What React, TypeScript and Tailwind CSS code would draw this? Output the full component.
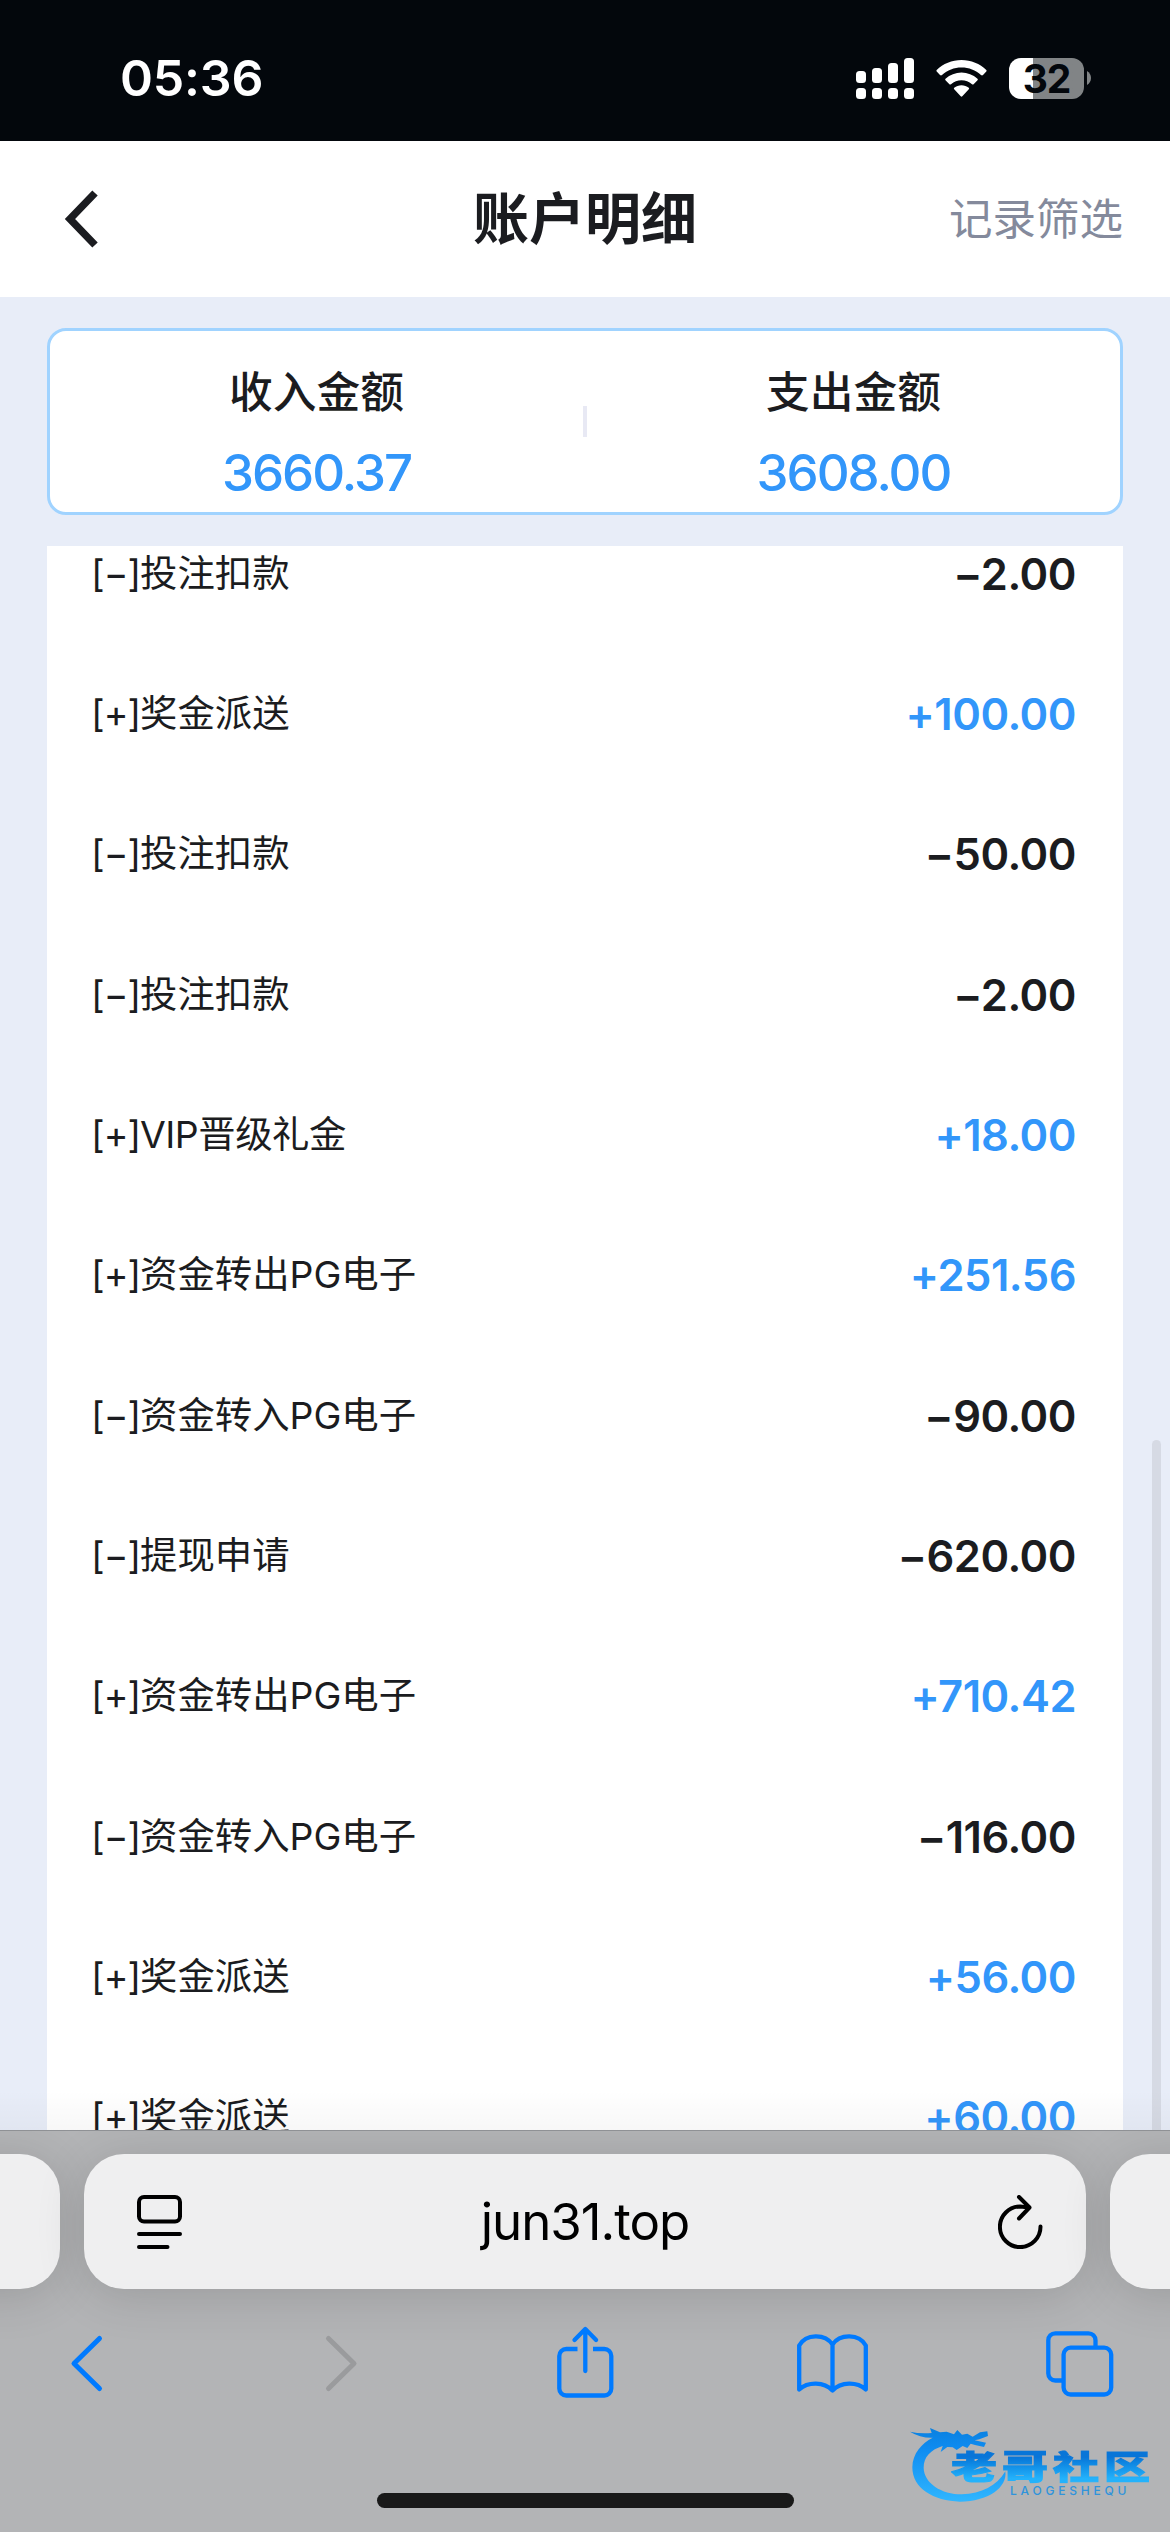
import clsx from "clsx";

interface RecordItem {
    label: string;
    amount: string;
}

const records: RecordItem[] = [
    { label: "投注扣款", amount: "−2.00" },
    { label: "奖金派送", amount: "+100.00" },
    { label: "投注扣款", amount: "−50.00" },
    { label: "投注扣款", amount: "−2.00" },
    { label: "VIP晋级礼金", amount: "+18.00" },
    { label: "资金转出PG电子", amount: "+251.56" },
    { label: "资金转入PG电子", amount: "−90.00" },
    { label: "提现申请", amount: "−620.00" },
    { label: "资金转出PG电子", amount: "+710.42" },
    { label: "资金转入PG电子", amount: "−116.00" },
    { label: "奖金派送", amount: "+56.00" },
    { label: "奖金派送", amount: "+60.00" },
];

function StatusBar() {
    return (
        <div className="h-[141px] shrink-0 bg-[#03070c] pt-[48px] pl-[120px] pr-[79px] flex justify-between text-white">
            <span className="h-[60px] leading-[60px] text-[50px] font-semibold tracking-[-0.2px]">05:36</span>
            <div className="h-[60px] flex items-center">
                <svg className="w-[58px] h-[41px]" viewBox="0 0 58 41" fill="currentColor">
                    <rect x="0" y="13" width="10" height="12" rx="3.5" />
                    <rect x="16" y="10" width="10" height="15" rx="3.5" />
                    <rect x="32" y="5" width="10" height="20" rx="3.5" />
                    <rect x="48" y="0" width="10" height="25" rx="3.5" />
                    <rect x="0" y="30" width="10" height="11" rx="3.5" />
                    <rect x="16" y="30" width="10" height="11" rx="3.5" />
                    <rect x="32" y="30" width="10" height="11" rx="3.5" />
                    <rect x="48" y="30" width="10" height="11" rx="3.5" />
                </svg>
                <svg className="w-[51px] h-[41px] ml-[22px]" viewBox="0 0 51 41" fill="currentColor">
                    <path d="M25.5 2C35 2 44 5.700 50.300 12Q51 12.800 50.300 13.600L47 17Q46 17.800 45 17C39.500 12 33 9.500 25.500 9.500S11.500 12 6 17Q5 17.800 4 17L.7 13.600Q0 12.800 .7 12C7 5.700 16 2 25.500 2Z" />
                    <path d="M25.500 14.500C31.500 14.500 37 16.800 41.500 20.700Q42.300 21.500 41.500 22.300L37.600 26.200Q36.800 26.900 36 26.200C33 23.700 29.500 22.300 25.500 22.300S18 23.700 15 26.200Q14.200 26.900 13.400 26.200L9.500 22.300Q8.700 21.500 9.500 20.700C14 16.800 19.500 14.500 25.500 14.500Z" />
                    <path d="M25.500 27.300C28.300 27.300 30.700 28.200 32.800 29.700Q33.600 30.400 32.800 31.200L26.300 38.300Q25.500 39.100 24.700 38.300L18.200 31.200Q17.400 30.400 18.200 29.700C20.300 28.200 22.700 27.300 25.500 27.300Z" />
                </svg>
                <div className="ml-[22px] w-[75px] h-[41px] rounded-[12px] bg-linear-to-r from-white from-[32%] to-[#818486] to-[32%] flex items-center justify-center">
                    <span className="text-[39px] leading-[41px] font-bold text-[#03070c] tracking-[-1px]">32</span>
                </div>
                <svg className="w-[4px] h-[14px] ml-[3px]" viewBox="0 0 4 14" fill="#818486">
                    <path d="M0 0C2.500 1.500 4 4 4 7S2.500 12.500 0 14Z" />
                </svg>
            </div>
        </div>
    );
}

function PageHeader() {
    return (
        <div className="h-[156px] shrink-0 bg-white grid grid-cols-3 items-center pl-[64px] pr-[47px] text-[#1b1c20]">
            <svg className="w-[34px] h-[58px]" viewBox="0 0 34 58" fill="none" stroke="currentColor" strokeWidth="7.5">
                <path d="M31 3L6 29L31 55" />
            </svg>
            <h1 className="text-center text-[56px] leading-[80px] font-semibold whitespace-nowrap -ml-[17px]">账户明细</h1>
            <span className="text-right text-[43.500px] leading-[60px] text-[#848a9c]">记录筛选</span>
        </div>
    );
}

function Summary({ title, value }: { title: string; value: string }) {
    return (
        <div className="flex-1 flex flex-col items-center pb-[8px]">
            <span className="mt-[29px] text-[43.700px] leading-[64px] font-medium text-[#1b1c20]">{title}</span>
            <span className="mt-[18px] text-[51px] leading-[60px] font-medium tracking-[-2px] text-[#3296fa]">{value}</span>
        </div>
    );
}

function RecordRow({ label, amount }: RecordItem) {
    const isIncome = amount.startsWith("+");

    return (
        <div className="h-[140.330px] pl-[44px] pr-[47px] flex items-center justify-between">
            <span className="text-[37.400px] leading-[54px] text-[#1b1c20]">
                <span className="tracking-[-1px]">{isIncome ? "[+]" : "[−]"}</span>
                <span className={clsx(label.startsWith("VIP") && "tracking-[-0.500px]")}>{label}</span>
            </span>
            <span
                className={clsx(
                    "text-[43.500px] leading-[54px] font-semibold tracking-[-0.500px]",
                    isIncome ? "text-[#3296fa]" : "text-[#1b1c20]"
                )}
            >
                {amount}
            </span>
        </div>
    );
}

function Watermark() {
    return (
        <div className="absolute left-[905px] top-[2422px] w-[250px] h-[84px]">
            <svg className="absolute left-0 top-0 w-[110px] h-[84px]" viewBox="75 66 330 252">
                <defs>
                    <linearGradient id="dragon" x1="0" y1="0" x2="0" y2="1">
                        <stop offset="0" stopColor="#0a80e0" />
                        <stop offset="0.3" stopColor="#0f8df2" />
                        <stop offset="1" stopColor="#30b6ff" />
                    </linearGradient>
                </defs>
                <path
                    fill="url(#dragon)"
                    d="M90 95Q120 102 155 99L150 84L180 97L200 95L222 103L232 90L246 104L262 101L278 110L300 97L322 94L324 108L298 118L284 121L318 128L312 141L285 135L272 131L262 144L248 138L230 150L218 142L202 141L182 156L188 138C150 150 131 172 131 203C132 250 185 283 245 283C305 281 350 258 376 214C383 262 325 305 240 305C160 303 97 265 97 202C98 160 125 130 158 113Q120 114 90 95Z"
                />
            </svg>
            <div className="absolute left-[46px] top-[28px] h-[34px] flex items-center">
                <span className="origin-center scale-y-[0.72] bg-linear-to-b from-[#0875d8] from-20% to-[#24b2fb] to-85% bg-clip-text text-transparent [-webkit-text-stroke:1.5px_transparent] text-[46px] leading-[46px] font-black tracking-[5px] whitespace-nowrap">
                    老哥社区
                </span>
            </div>
            <span className="absolute left-[105px] top-[63px] text-[12px] leading-[12px] font-medium tracking-[3.800px] text-[#2f93dc]">LAOGESHEQU</span>
        </div>
    );
}

function BrowserBar() {
    return (
        <div className="h-[402px] shrink-0 bg-[#b3b4b6] border-t border-[#8f9195] overflow-hidden">
            <div className="mt-[23px] -mx-[60px] flex gap-[24px]">
                <div className="w-[120px] h-[135px] shrink-0 rounded-[40px] bg-[#efeff0] shadow-[0_6px_50px_rgba(0,0,0,0.14)]" />
                <div className="flex-1 h-[135px] rounded-[40px] bg-[#efeff0] shadow-[0_6px_50px_rgba(0,0,0,0.14)] flex items-center justify-between pl-[53px] pr-[43px] text-black">
                    <svg className="w-[45px] h-[54px]" viewBox="0 0 45 54" fill="none" stroke="currentColor" strokeWidth="4" strokeLinecap="round">
                        <rect x="2" y="2" width="41" height="24.500" rx="5" />
                        <path d="M2 39H43M2 52H30.500" />
                    </svg>
                    <span className="-ml-[10px] text-[51px] leading-[60px] tracking-[-1px]">jun31.top</span>
                    <svg className="w-[45px] h-[54px]" viewBox="0 0 45 54" fill="none" stroke="currentColor" strokeWidth="4" strokeLinecap="round" strokeLinejoin="round">
                        <path d="M42.500 31.500A20.300 20.300 0 1 1 22.200 11.500L31 12.500" />
                        <path d="M21 2L31.500 12.500L21 23.500" />
                    </svg>
                </div>
                <div className="w-[120px] h-[135px] shrink-0 rounded-[40px] bg-[#efeff0] shadow-[0_6px_50px_rgba(0,0,0,0.14)]" />
            </div>

            <div className="mt-[31px] pl-[47px] pr-[51px] flex justify-between text-[#007aff]">
                <svg className="w-[80px] h-[80px]" viewBox="0 0 80 80" fill="none" stroke="currentColor" strokeWidth="5" strokeLinecap="round" strokeLinejoin="round">
                    <path d="M52.500 18.500L27 43.500L52.500 68.500" />
                </svg>
                <svg className="w-[80px] h-[80px] text-[#9a9b9d]" viewBox="0 0 80 80" fill="none" stroke="currentColor" strokeWidth="5" strokeLinecap="round" strokeLinejoin="round">
                    <path d="M33.500 18.500L59 43.500L33.500 68.500" />
                </svg>
                <svg className="w-[80px] h-[80px]" viewBox="0 0 80 80" fill="none" stroke="currentColor" strokeWidth="4.3" strokeLinejoin="round">
                    <path d="M34.500 29H23.300A7 7 0 0 0 16.300 36V68.500A7 7 0 0 0 23.300 75.500H61.300A7 7 0 0 0 68.300 68.500V36A7 7 0 0 0 61.300 29H50" />
                    <path strokeLinecap="round" d="M42.300 51V9.500M31.500 20L42.300 9L53.100 20" />
                </svg>
                <svg className="w-[80px] h-[80px]" viewBox="0 0 80 80" fill="none" stroke="currentColor" strokeWidth="4.3" strokeLinejoin="round">
                    <path d="M8.200 69.500V25.500C15 13.500 34 13.500 41.500 24.500C49 13.500 68 13.500 74.800 25.500V69.500C66 61.500 50 61.500 41.500 70.500C33 61.500 17 61.500 8.200 69.500ZM41.500 24.500V70.500" />
                </svg>
                <svg className="w-[80px] h-[80px]" viewBox="0 0 80 80" fill="none" stroke="currentColor" strokeWidth="4.3">
                    <rect x="24.600" y="27.600" width="47.600" height="46.900" rx="7" />
                    <path d="M56.500 27V20.300A7 7 0 0 0 49.500 13.300H16.300A7 7 0 0 0 9.300 20.300V53.500A7 7 0 0 0 16.300 60.500H24" />
                </svg>
            </div>

            {/* home indicator */}
            <div className="mt-[93px] mx-auto w-[417px] h-[15px] rounded-full bg-[#191919]" />
        </div>
    );
}

export default function App() {
    return (
        <div className="relative w-[1170px] h-[2532px] flex flex-col overflow-hidden bg-[#e8edf8] font-['Inter','Noto_Sans_CJK_SC',sans-serif]">
            <StatusBar />
            <PageHeader />

            <div className="h-[1833px] shrink-0 px-[47px] pt-[31px] flex flex-col overflow-hidden">
                <div className="h-[187px] shrink-0 bg-white border-[3px] border-[#a0d3ff] rounded-[19px] flex items-center">
                    <Summary title="收入金额" value="3660.37" />
                    <div className="w-[4px] h-[31px] bg-[#e8e9f4]" />
                    <Summary title="支出金额" value="3608.00" />
                </div>

                <div className="mt-[31px] flex-1 min-h-0 bg-white overflow-hidden">
                    <div className="-mt-[42.500px]">
                        {records.map((item, i) => (
                            <RecordRow key={i} {...item} />
                        ))}
                    </div>
                </div>
            </div>

            <BrowserBar />

            {/* scroll thumb and the soft edge above the toolbar */}
            <div className="absolute left-[1152px] top-[1440px] w-[9px] h-[690px] rounded-t-full bg-[#d6dae4]" />
            <div className="absolute left-0 top-[2090px] w-full h-[40px] bg-linear-to-b from-black/0 to-black/3" />

            <Watermark />
        </div>
    );
}
